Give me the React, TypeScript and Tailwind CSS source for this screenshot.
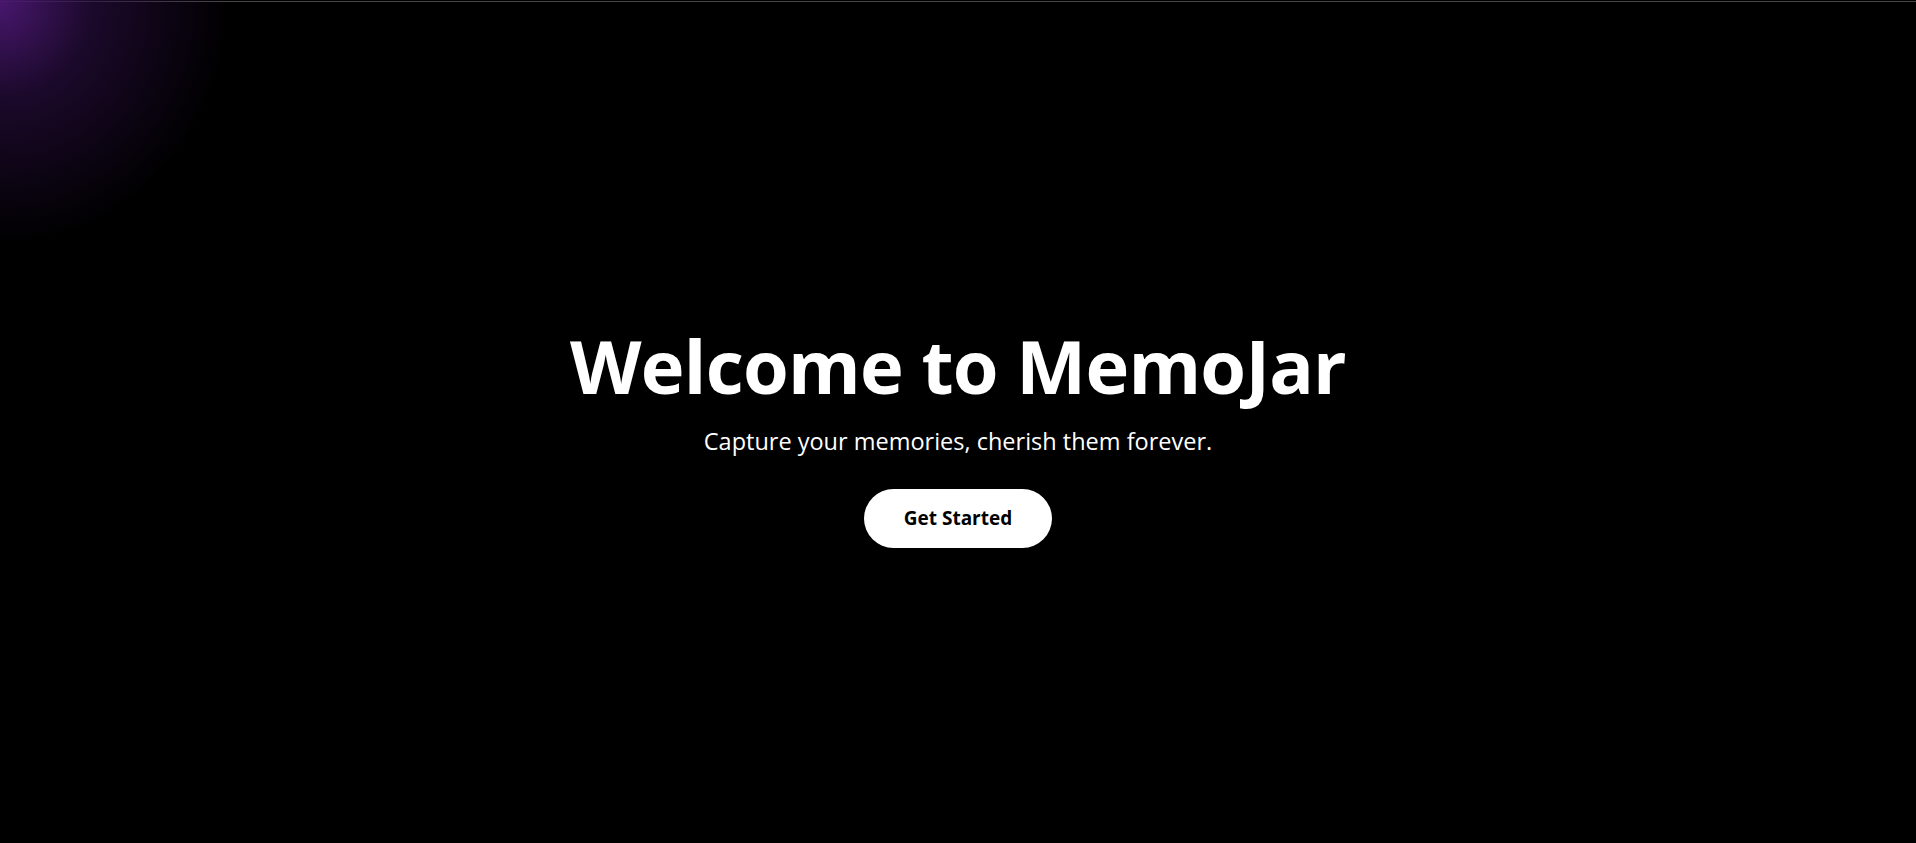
export default function App() {
  return (
    <div className="relative min-h-screen overflow-hidden bg-black font-['Open_Sans',sans-serif] text-white">
      <div className="h-[2px] border-b border-[#474747]" />
      <div className="pointer-events-none absolute left-0 top-0 h-[320px] w-[320px] bg-[radial-gradient(ellipse_230px_245px_at_0_0,rgba(76,24,116,0.95)_0%,rgba(42,14,66,0.65)_40%,transparent_100%)]" />

      <main className="relative flex min-h-[841px] flex-col items-center justify-center pt-[32px]">
        <h1 className="text-[74px] font-bold leading-none tracking-[-0.01em]">Welcome to MemoJar</h1>
        <p className="mt-[22px] text-[23.5px] leading-8">Capture your memories, cherish them forever.</p>
        <button className="mt-[32px] flex h-[59px] w-[188px] items-center justify-center rounded-full bg-white text-[19px] font-bold text-black">
          Get Started
        </button>
      </main>
    </div>
  );
}
